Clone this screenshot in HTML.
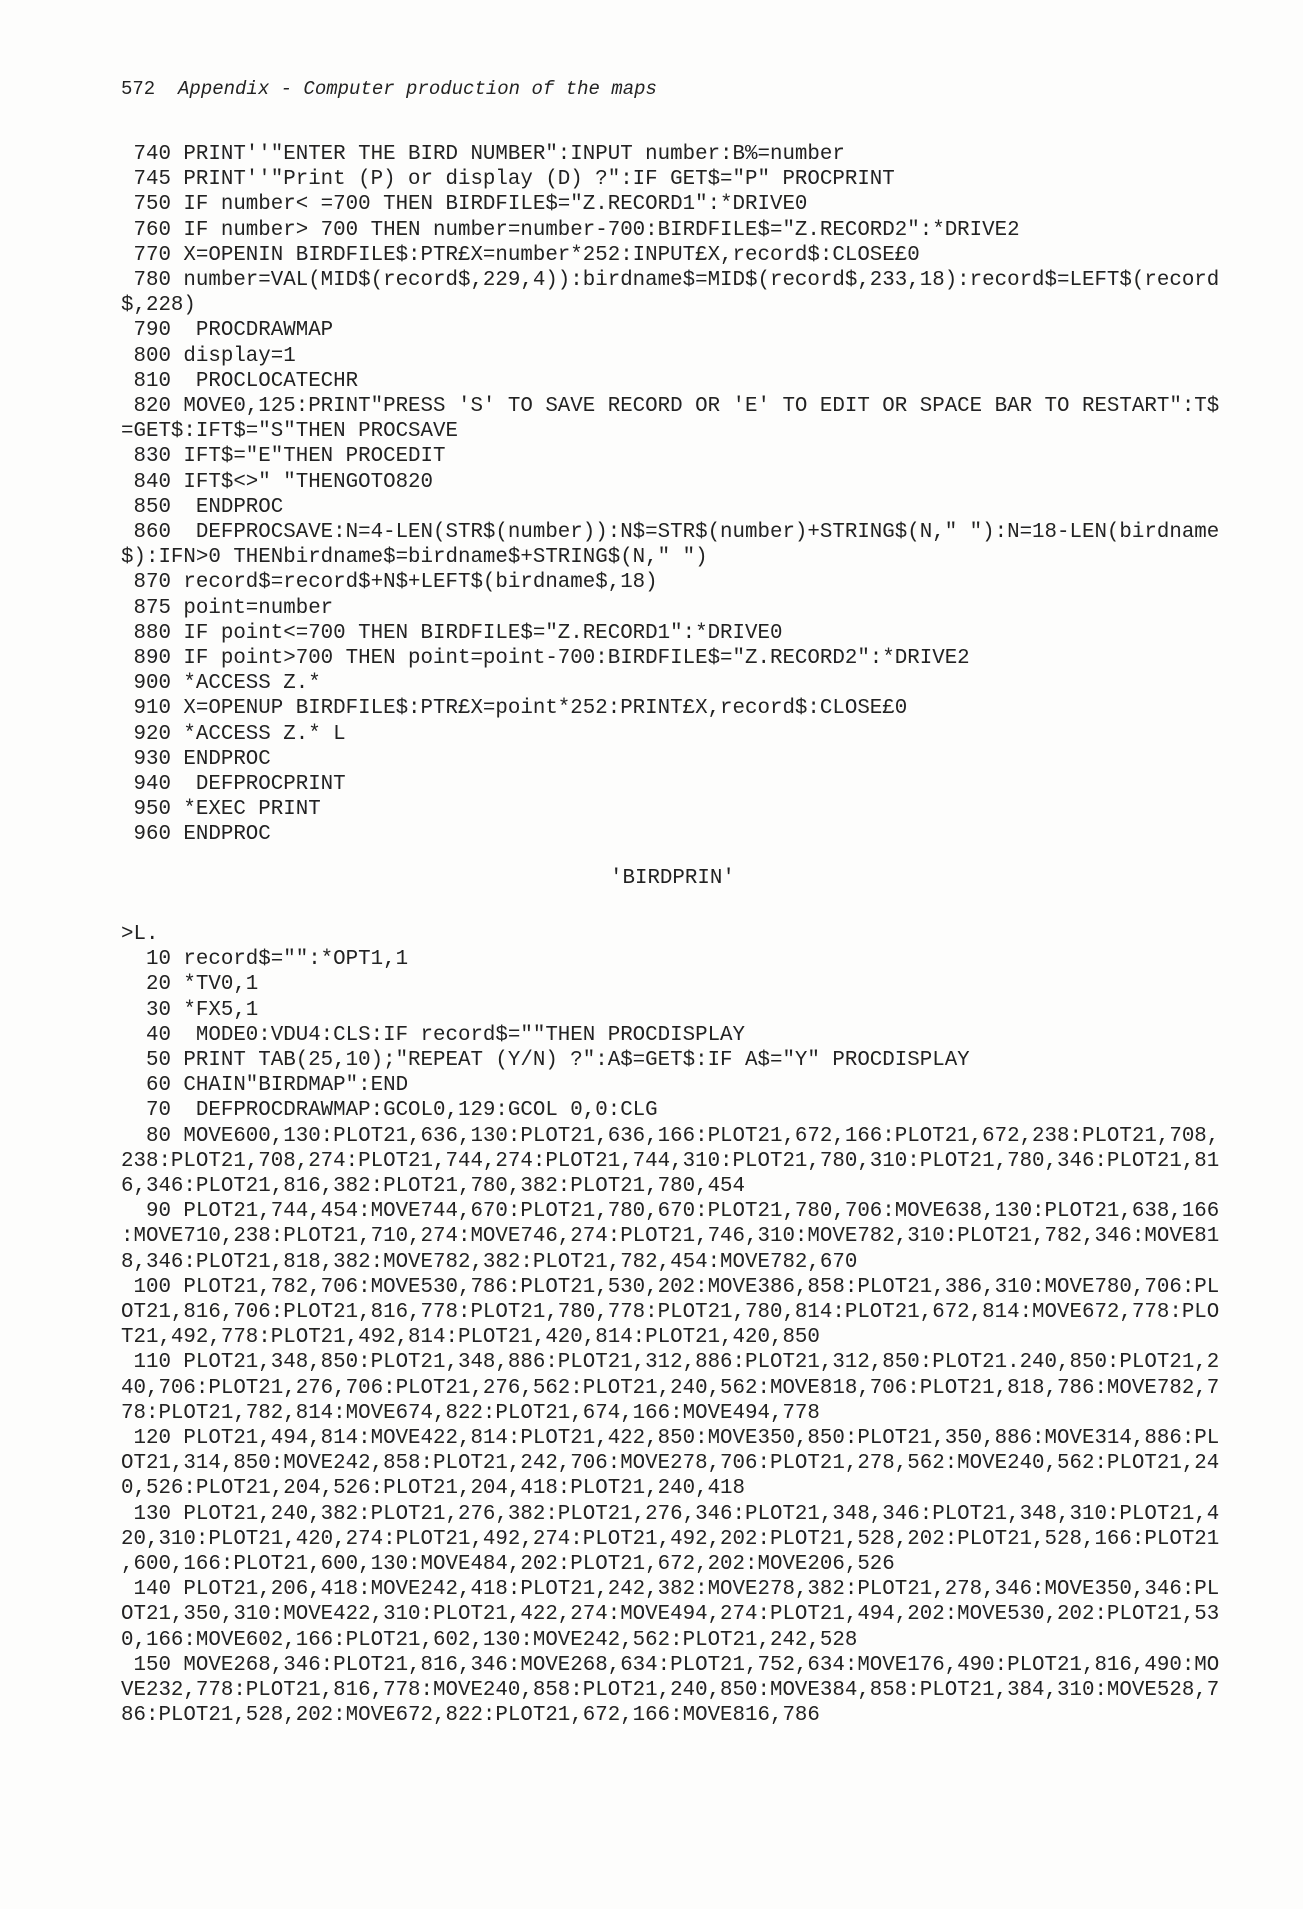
<!DOCTYPE html>
<html><head><meta charset="utf-8"><style>
html,body{margin:0;padding:0;background:#fdfdfc;}
body{width:1303px;height:1909px;position:relative;overflow:hidden;color:#222;}
pre{position:absolute;margin:0;font-family:"Liberation Mono",monospace;font-size:20.8px;line-height:25.2px;white-space:pre;}
.h{left:121px;top:77px;font-size:19px;}
.h i{font-style:italic;}
</style></head><body>
<pre class="h">572  <i>Appendix - Computer production of the maps</i></pre>
<pre style="left:121px;top:142px;"> 740 PRINT''"ENTER THE BIRD NUMBER":INPUT number:B%=number
 745 PRINT''"Print (P) or display (D) ?":IF GET$="P" PROCPRINT
 750 IF number&lt; =700 THEN BIRDFILE$="Z.RECORD1":*DRIVE0
 760 IF number&gt; 700 THEN number=number-700:BIRDFILE$="Z.RECORD2":*DRIVE2
 770 X=OPENIN BIRDFILE$:PTR£X=number*252:INPUT£X,record$:CLOSE£0
 780 number=VAL(MID$(record$,229,4)):birdname$=MID$(record$,233,18):record$=LEFT$(record
$,228)
 790  PROCDRAWMAP
 800 display=1
 810  PROCLOCATECHR
 820 MOVE0,125:PRINT"PRESS 'S' TO SAVE RECORD OR 'E' TO EDIT OR SPACE BAR TO RESTART":T$
=GET$:IFT$="S"THEN PROCSAVE
 830 IFT$="E"THEN PROCEDIT
 840 IFT$&lt;&gt;" "THENGOTO820
 850  ENDPROC
 860  DEFPROCSAVE:N=4-LEN(STR$(number)):N$=STR$(number)+STRING$(N," "):N=18-LEN(birdname
$):IFN&gt;0 THENbirdname$=birdname$+STRING$(N," ")
 870 record$=record$+N$+LEFT$(birdname$,18)
 875 point=number
 880 IF point&lt;=700 THEN BIRDFILE$="Z.RECORD1":*DRIVE0
 890 IF point&gt;700 THEN point=point-700:BIRDFILE$="Z.RECORD2":*DRIVE2
 900 *ACCESS Z.*
 910 X=OPENUP BIRDFILE$:PTR£X=point*252:PRINT£X,record$:CLOSE£0
 920 *ACCESS Z.* L
 930 ENDPROC
 940  DEFPROCPRINT
 950 *EXEC PRINT
 960 ENDPROC</pre>
<pre style="left:610px;top:866px;">'BIRDPRIN'</pre>
<pre style="left:121px;top:922px;">&gt;L.
  10 record$="":*OPT1,1
  20 *TV0,1
  30 *FX5,1
  40  MODE0:VDU4:CLS:IF record$=""THEN PROCDISPLAY
  50 PRINT TAB(25,10);"REPEAT (Y/N) ?":A$=GET$:IF A$="Y" PROCDISPLAY
  60 CHAIN"BIRDMAP":END
  70  DEFPROCDRAWMAP:GCOL0,129:GCOL 0,0:CLG
  80 MOVE600,130:PLOT21,636,130:PLOT21,636,166:PLOT21,672,166:PLOT21,672,238:PLOT21,708,
238:PLOT21,708,274:PLOT21,744,274:PLOT21,744,310:PLOT21,780,310:PLOT21,780,346:PLOT21,81
6,346:PLOT21,816,382:PLOT21,780,382:PLOT21,780,454
  90 PLOT21,744,454:MOVE744,670:PLOT21,780,670:PLOT21,780,706:MOVE638,130:PLOT21,638,166
:MOVE710,238:PLOT21,710,274:MOVE746,274:PLOT21,746,310:MOVE782,310:PLOT21,782,346:MOVE81
8,346:PLOT21,818,382:MOVE782,382:PLOT21,782,454:MOVE782,670
 100 PLOT21,782,706:MOVE530,786:PLOT21,530,202:MOVE386,858:PLOT21,386,310:MOVE780,706:PL
OT21,816,706:PLOT21,816,778:PLOT21,780,778:PLOT21,780,814:PLOT21,672,814:MOVE672,778:PLO
T21,492,778:PLOT21,492,814:PLOT21,420,814:PLOT21,420,850
 110 PLOT21,348,850:PLOT21,348,886:PLOT21,312,886:PLOT21,312,850:PLOT21.240,850:PLOT21,2
40,706:PLOT21,276,706:PLOT21,276,562:PLOT21,240,562:MOVE818,706:PLOT21,818,786:MOVE782,7
78:PLOT21,782,814:MOVE674,822:PLOT21,674,166:MOVE494,778
 120 PLOT21,494,814:MOVE422,814:PLOT21,422,850:MOVE350,850:PLOT21,350,886:MOVE314,886:PL
OT21,314,850:MOVE242,858:PLOT21,242,706:MOVE278,706:PLOT21,278,562:MOVE240,562:PLOT21,24
0,526:PLOT21,204,526:PLOT21,204,418:PLOT21,240,418
 130 PLOT21,240,382:PLOT21,276,382:PLOT21,276,346:PLOT21,348,346:PLOT21,348,310:PLOT21,4
20,310:PLOT21,420,274:PLOT21,492,274:PLOT21,492,202:PLOT21,528,202:PLOT21,528,166:PLOT21
,600,166:PLOT21,600,130:MOVE484,202:PLOT21,672,202:MOVE206,526
 140 PLOT21,206,418:MOVE242,418:PLOT21,242,382:MOVE278,382:PLOT21,278,346:MOVE350,346:PL
OT21,350,310:MOVE422,310:PLOT21,422,274:MOVE494,274:PLOT21,494,202:MOVE530,202:PLOT21,53
0,166:MOVE602,166:PLOT21,602,130:MOVE242,562:PLOT21,242,528
 150 MOVE268,346:PLOT21,816,346:MOVE268,634:PLOT21,752,634:MOVE176,490:PLOT21,816,490:MO
VE232,778:PLOT21,816,778:MOVE240,858:PLOT21,240,850:MOVE384,858:PLOT21,384,310:MOVE528,7
86:PLOT21,528,202:MOVE672,822:PLOT21,672,166:MOVE816,786</pre>
</body></html>
